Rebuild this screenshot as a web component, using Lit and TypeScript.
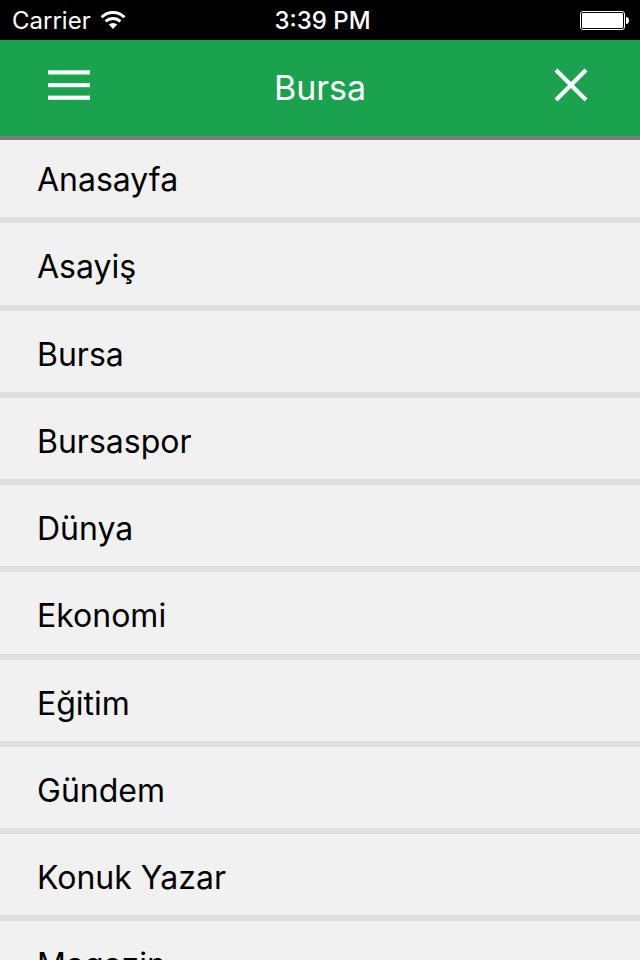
import { LitElement, html, css } from "lit";
import { customElement, property, state } from "lit/decorators.js";

@customElement("status-bar")
class StatusBar extends LitElement {
  static styles = css`
    :host {
      display: grid;
      grid-template-columns: 1fr auto 1fr;
      align-items: center;
      height: 40px;
      padding: 0 11px 0 12px;
      background: #000;
      color: #fff;
      font-size: 24px;
      line-height: 24px;
    }
    .carrier {
      display: flex;
      align-items: center;
      gap: 9px;
    }
    span {
      padding-top: 2px;
    }
    .time {
      font-weight: 500;
      padding-left: 4px;
    }
    .battery {
      justify-self: end;
    }
    svg {
      display: block;
    }
  `;

  render() {
    return html`
      <div class="carrier">
        <span>Carrier</span>
        <svg width="26" height="20" viewBox="0 0 26 20" fill="none" stroke="#fff" stroke-width="3">
          <path d="M1.6 7.2 A16.2 16.2 0 0 1 24.4 7.2" />
          <path d="M5.6 11.4 A10.6 10.6 0 0 1 20.4 11.4" />
          <path d="M13 19 L8.8 14.6 A6 6 0 0 1 17.2 14.6 Z" fill="#fff" stroke="none" />
        </svg>
      </div>
      <span class="time">3:39 PM</span>
      <svg class="battery" width="49" height="20" viewBox="0 0 49 20">
        <rect x="0.5" y="1.5" width="44" height="18" rx="2.5" fill="none" stroke="#fff" />
        <rect x="2" y="3" width="41" height="15" rx="1" fill="#fff" />
        <path d="M46 7 Q49 7.4 49 10.5 Q49 13.6 46 14 Z" fill="#fff" />
      </svg>
    `;
  }
}

@customElement("nav-header")
class NavHeader extends LitElement {
  @property() heading = "";

  static styles = css`
    :host {
      display: grid;
      grid-template-columns: 1fr auto 1fr;
      align-items: center;
      height: 96px;
      padding: 0 40px;
      background: #1ba24e;
      color: #fff;
      box-shadow: 0 4px 0 #7b7b7b;
      position: relative;
      z-index: 1;
    }
    h1 {
      margin: 0;
      font-size: 34px;
      line-height: 96px;
      font-weight: 400;
    }
    button {
      display: flex;
      align-items: center;
      justify-content: center;
      width: 58px;
      height: 58px;
      margin: 0 0 6px;
      padding: 0;
      border: 0;
      background: none;
      color: inherit;
      cursor: pointer;
    }
    .close {
      justify-self: end;
    }
  `;

  private toggle() {
    this.dispatchEvent(new CustomEvent("close-menu"));
  }

  render() {
    return html`
      <button aria-label="Menü">
        <svg width="42" height="30" viewBox="0 0 42 30" fill="currentColor">
          <rect y="0.3" width="42" height="4.2" />
          <rect y="13.2" width="42" height="4" />
          <rect y="25.6" width="42" height="4.2" />
        </svg>
      </button>
      <h1>${this.heading}</h1>
      <button class="close" aria-label="Kapat" @click=${this.toggle}>
        <svg width="34" height="34" viewBox="0 0 34 34" stroke="currentColor" stroke-width="4.2">
          <path d="M2 2 L32 32 M32 2 L2 32" />
        </svg>
      </button>
    `;
  }
}

@customElement("category-list")
class CategoryList extends LitElement {
  @property({ attribute: false }) items: string[] = [];

  static styles = css`
    :host {
      display: block;
      flex: 1;
      min-height: 0;
      overflow-y: auto;
      scrollbar-width: none;
    }
    ul {
      list-style: none;
      margin: 0;
      padding: 0;
    }
    a {
      display: block;
      padding: 24px 37px 17px;
      border-bottom: 6px solid #dedede;
      color: #000;
      font-size: 32px;
      line-height: 40px;
      text-decoration: none;
    }
    li:nth-child(4n + 2) a {
      padding-bottom: 18px;
    }
  `;

  render() {
    return html`
      <ul>
        ${this.items.map((name) => html`<li><a href="#">${name}</a></li>`)}
      </ul>
    `;
  }
}

@customElement("app-root")
class AppRoot extends LitElement {
  @state() private open = true;

  static styles = css`
    :host {
      display: flex;
      flex-direction: column;
      height: 100vh;
      background: #f1f1f1;
      font-family: Inter, "Liberation Sans", sans-serif;
    }
  `;

  private categories = [
    "Anasayfa",
    "Asayiş",
    "Bursa",
    "Bursaspor",
    "Dünya",
    "Ekonomi",
    "Eğitim",
    "Gündem",
    "Konuk Yazar",
    "Magazin",
  ];

  render() {
    return html`
      <status-bar></status-bar>
      <nav-header heading="Bursa" @close-menu=${() => (this.open = false)}></nav-header>
      ${this.open ? html`<category-list .items=${this.categories}></category-list>` : null}
    `;
  }
}
